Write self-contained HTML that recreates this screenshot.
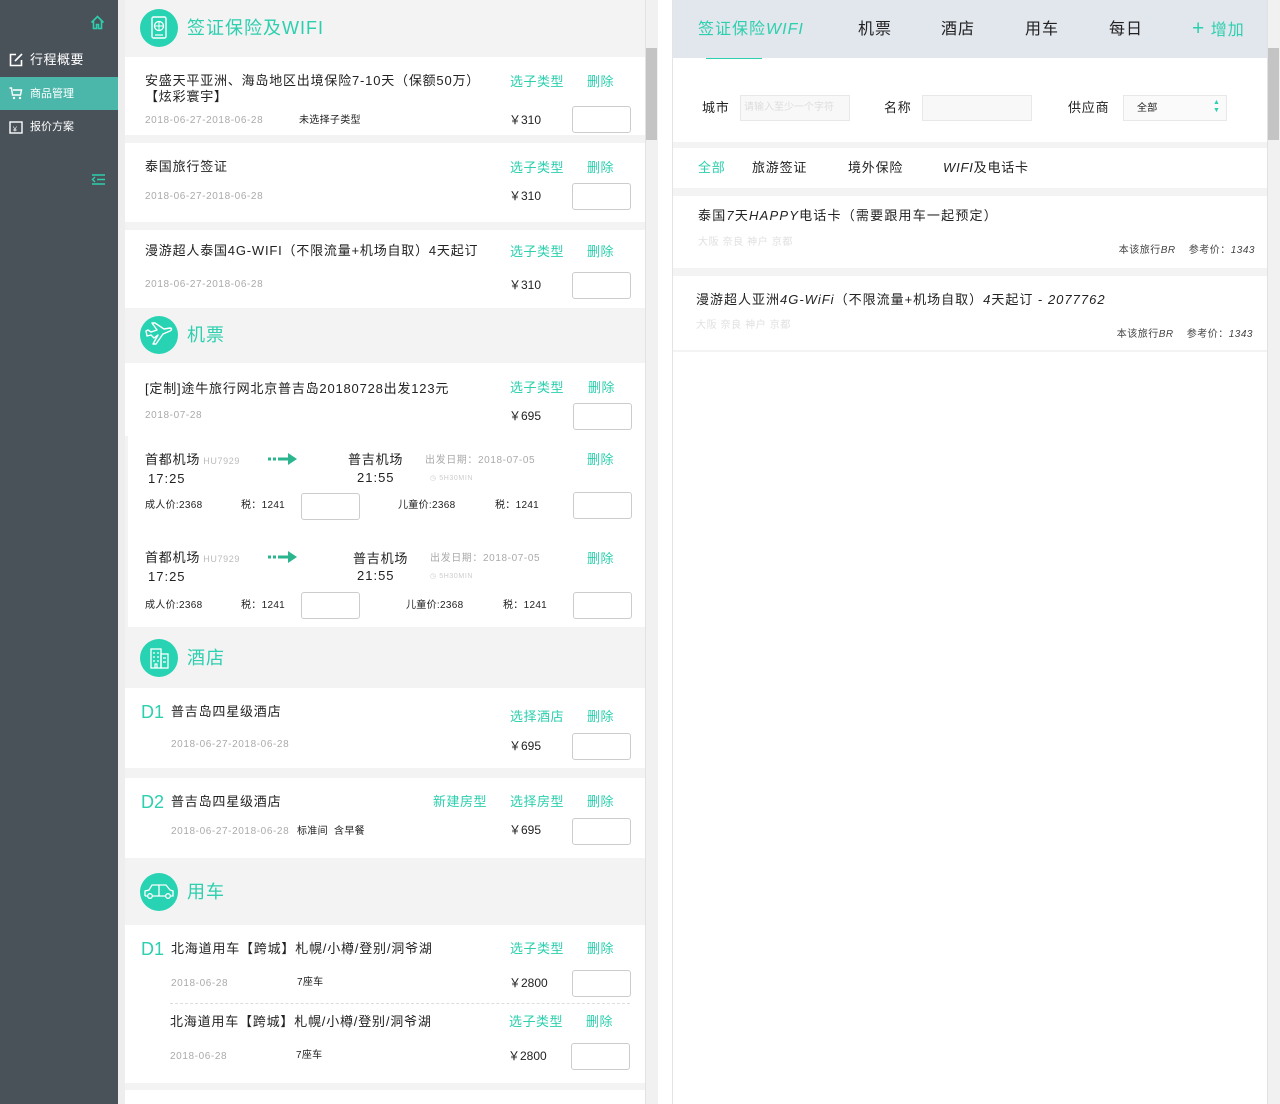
<!DOCTYPE html>
<html><head><meta charset="utf-8"><style>
*{margin:0;padding:0;box-sizing:border-box}
body{width:1280px;height:1104px;position:relative;overflow:hidden;background:#fff;font-family:"Liberation Sans","Noto Sans CJK SC",sans-serif;color:#222}
div,span{position:absolute}
.t{font-size:13px;line-height:14px;white-space:nowrap;color:#222;letter-spacing:.8px}
.g{font-size:10px;line-height:12px;color:#aaa;white-space:nowrap;letter-spacing:.6px}
.k{font-size:10px;line-height:12px;color:#222;white-space:nowrap;letter-spacing:.3px}
.l{font-size:13px;line-height:14px;color:#2ccfae;white-space:nowrap;letter-spacing:.5px}
.p{font-size:12px;line-height:14px;color:#222;white-space:nowrap}
.in{border:1px solid #ccc;border-radius:3px;width:59px;height:27px;background:#fff}
.w{background:#fff;left:125px;width:520px}
.ic{width:38px;height:38px;border-radius:50%;background:#27d3b2;left:140px}
.h{font-size:18px;line-height:20px;color:#2ccfae;left:187px;white-space:nowrap;letter-spacing:1px}
.d{font-size:18px;line-height:20px;color:#2ccfae;left:141px}
.rt{font-size:16px;line-height:16px;color:#222;white-space:nowrap;letter-spacing:1px}
.rk{font-size:10px;line-height:12px;color:#444;white-space:nowrap;letter-spacing:.5px;right:25px}
</style></head><body>
<div style="left:0;top:0;width:118px;height:1104px;background:#4a5259"></div>
<div style="left:118px;top:0;width:7px;height:1104px;background:#eee"></div>
<svg style="position:absolute;left:90px;top:15px" width="15" height="15" viewBox="0 0 15 15"><path d="M1.5 7.5L7.5 1.5L13.5 7.5M3.5 6v7.5h3v-4h2v4h3V6" fill="none" stroke="#2ccfae" stroke-width="1.6"/></svg>
<svg style="position:absolute;left:9px;top:53px" width="14" height="14" viewBox="0 0 14 14"><path d="M7 1.5H1.5v11h11V7M6 8l7-7" fill="none" stroke="#fff" stroke-width="1.6"/></svg>
<div style="left:30px;top:52px;font-size:13px;line-height:15px;color:#fff;letter-spacing:.5px">行程概要</div>
<div style="left:0;top:77px;width:118px;height:33px;background:#4bb7ab"></div>
<svg style="position:absolute;left:9px;top:87px" width="14" height="13" viewBox="0 0 14 13"><path d="M0.5 1h2l1 7h8l1-5H4" fill="none" stroke="#fff" stroke-width="1.4"/><circle cx="5" cy="11" r="1.2" fill="#fff"/><circle cx="11" cy="11" r="1.2" fill="#fff"/></svg>
<div style="left:30px;top:88px;font-size:11px;line-height:12px;color:#fff">商品管理</div>
<svg style="position:absolute;left:9px;top:121px" width="14" height="13" viewBox="0 0 14 13"><rect x="1" y="1" width="12" height="11" fill="none" stroke="#fff" stroke-width="1.4"/><text x="4" y="10.5" font-size="7" fill="#fff">¥</text></svg>
<div style="left:30px;top:121px;font-size:11px;line-height:12px;color:#fff">报价方案</div>
<svg style="position:absolute;left:91px;top:174px" width="14" height="11" viewBox="0 0 14 11"><path d="M1 1h13M6 5.5h8M1 10h13M4 3L1.5 5.5 4 8" fill="none" stroke="#2ccfae" stroke-width="1.4"/></svg>

<div style="left:125px;top:0;width:520px;height:1104px;background:#f3f3f3"></div>
<div style="left:645px;top:0;width:13px;height:1104px;background:#f1f1f1;border-left:1px solid #e2e2e2"></div>
<div style="left:646px;top:48px;width:11px;height:92px;background:#c4c4c4"></div>

<div class="ic" style="top:9px"></div>
<svg style="position:absolute;left:140px;top:9px" width="38" height="38"><rect x="12" y="8" width="14" height="21" rx="1.5" fill="none" stroke="#fff" stroke-width="1.4"/><circle cx="19" cy="17" r="4.5" fill="none" stroke="#fff" stroke-width="1.3"/><path d="M14.5 17h9M19 12.5v9" stroke="#fff" stroke-width="1"/><path d="M15 26h8" stroke="#fff" stroke-width="1.2"/></svg>
<div class="h" style="top:18px">签证保险及WIFI</div>

<div class="w" style="top:57px;height:78px"></div>
<div class="t" style="left:145px;top:74px">安盛天平亚洲、海岛地区出境保险7-10天（保额50万）</div>
<div class="t" style="left:145px;top:90px">【炫彩寰宇】</div>
<div class="g" style="left:145px;top:115px">2018-06-27-2018-06-28</div>
<div class="k" style="left:299px;top:115px">未选择子类型</div>
<div class="l" style="left:510px;top:75px">选子类型</div><div class="l" style="left:587px;top:75px">删除</div>
<div class="p" style="left:509px;top:113px">￥310</div>
<div class="in" style="left:572px;top:106px"></div>

<div class="w" style="top:143px;height:79px"></div>
<div class="t" style="left:145px;top:160px">泰国旅行签证</div>
<div class="g" style="left:145px;top:191px">2018-06-27-2018-06-28</div>
<div class="l" style="left:510px;top:161px">选子类型</div><div class="l" style="left:587px;top:161px">删除</div>
<div class="p" style="left:509px;top:189px">￥310</div>
<div class="in" style="left:572px;top:183px"></div>

<div class="w" style="top:230px;height:78px"></div>
<div class="t" style="left:145px;top:244px">漫游超人泰国4G-WIFI（不限流量+机场自取）4天起订</div>
<div class="g" style="left:145px;top:279px">2018-06-27-2018-06-28</div>
<div class="l" style="left:510px;top:245px">选子类型</div><div class="l" style="left:587px;top:245px">删除</div>
<div class="p" style="left:509px;top:278px">￥310</div>
<div class="in" style="left:572px;top:272px"></div>

<div class="ic" style="top:316px"></div>
<svg style="position:absolute;left:140px;top:316px" width="38" height="38"><path d="M7 20l4-1 3 3 4-3-5 9 3 0 7-10 7-3c2-1 2-3 0-3l-6 1-9-6-3 0 5 7-6 2-3-2-2 1z" fill="none" stroke="#fff" stroke-width="1.4" stroke-linejoin="round"/></svg>
<div class="h" style="top:325px">机票</div>

<div class="w" style="top:363px;height:73px"></div>
<div class="t" style="left:145px;top:382px">[定制]途牛旅行网北京普吉岛20180728出发123元</div>
<div class="g" style="left:145px;top:410px">2018-07-28</div>
<div class="l" style="left:510px;top:381px">选子类型</div><div class="l" style="left:588px;top:381px">删除</div>
<div class="p" style="left:509px;top:409px">￥695</div>
<div class="in" style="left:573px;top:403px"></div>

<div style="left:128px;top:436px;width:517px;height:191px;background:#fff"></div>
<div class="t" style="left:145px;top:453px">首都机场<span class="g" style="position:static;font-size:9px;color:#bbb"> HU7929</span></div>
<svg style="position:absolute;left:268px;top:453px" width="30" height="12"><path d="M0 6h3M5 6h3M10 6h12" stroke="#2ab58f" stroke-width="3"/><path d="M20 0l9 6-9 6z" fill="#2ab58f"/></svg>
<div class="t" style="left:348px;top:453px">普吉机场</div>
<div class="g" style="left:425px;top:455px">出发日期：2018-07-05</div>
<div class="g" style="left:430px;top:473px;font-size:7px;color:#ccc">◷ 5H30MIN</div>
<div class="l" style="left:587px;top:453px">删除</div>
<div class="t" style="left:148px;top:472px;letter-spacing:1px">17:25</div>
<div class="t" style="left:357px;top:471px;letter-spacing:1px">21:55</div>
<div class="k" style="left:145px;top:500px">成人价:2368</div>
<div class="k" style="left:241px;top:500px">税：1241</div>
<div class="in" style="left:301px;top:493px"></div>
<div class="k" style="left:398px;top:500px">儿童价:2368</div>
<div class="k" style="left:495px;top:500px">税：1241</div>
<div class="in" style="left:573px;top:492px"></div>
<div class="t" style="left:145px;top:551px">首都机场<span class="g" style="position:static;font-size:9px;color:#bbb"> HU7929</span></div>
<svg style="position:absolute;left:268px;top:551px" width="30" height="12"><path d="M0 6h3M5 6h3M10 6h12" stroke="#2ab58f" stroke-width="3"/><path d="M20 0l9 6-9 6z" fill="#2ab58f"/></svg>
<div class="t" style="left:353px;top:552px">普吉机场</div>
<div class="g" style="left:430px;top:553px">出发日期：2018-07-05</div>
<div class="g" style="left:430px;top:571px;font-size:7px;color:#ccc">◷ 5H30MIN</div>
<div class="l" style="left:587px;top:552px">删除</div>
<div class="t" style="left:148px;top:570px;letter-spacing:1px">17:25</div>
<div class="t" style="left:357px;top:569px;letter-spacing:1px">21:55</div>
<div class="k" style="left:145px;top:600px">成人价:2368</div>
<div class="k" style="left:241px;top:600px">税：1241</div>
<div class="in" style="left:301px;top:592px"></div>
<div class="k" style="left:406px;top:600px">儿童价:2368</div>
<div class="k" style="left:503px;top:600px">税：1241</div>
<div class="in" style="left:573px;top:592px"></div>

<div class="ic" style="top:639px"></div>
<svg style="position:absolute;left:140px;top:639px" width="38" height="38"><rect x="11" y="10" width="10" height="19" fill="none" stroke="#fff" stroke-width="1.3"/><rect x="21" y="15" width="7" height="14" fill="none" stroke="#fff" stroke-width="1.3"/><path d="M13 14h2M17 14h2M13 18h2M17 18h2M13 22h2M17 22h2M23 19h3M23 23h3M15 29v-4h2v4" stroke="#fff" stroke-width="1.2" fill="none"/></svg>
<div class="h" style="top:648px">酒店</div>

<div class="w" style="top:688px;height:80px"></div>
<div class="d" style="top:702px">D1</div>
<div class="t" style="left:171px;top:705px">普吉岛四星级酒店</div>
<div class="g" style="left:171px;top:739px">2018-06-27-2018-06-28</div>
<div class="l" style="left:510px;top:710px">选择酒店</div><div class="l" style="left:587px;top:710px">删除</div>
<div class="p" style="left:509px;top:739px">￥695</div>
<div class="in" style="left:572px;top:733px"></div>

<div class="w" style="top:778px;height:80px"></div>
<div class="d" style="top:792px">D2</div>
<div class="t" style="left:171px;top:795px">普吉岛四星级酒店</div>
<div class="g" style="left:171px;top:826px">2018-06-27-2018-06-28</div>
<div class="k" style="left:297px;top:826px">标准间&nbsp; 含早餐</div>
<div class="l" style="left:433px;top:795px">新建房型</div><div class="l" style="left:510px;top:795px">选择房型</div><div class="l" style="left:587px;top:795px">删除</div>
<div class="p" style="left:509px;top:823px">￥695</div>
<div class="in" style="left:572px;top:818px"></div>

<div class="ic" style="top:873px"></div>
<svg style="position:absolute;left:140px;top:873px" width="38" height="38"><path d="M5 23v-5l4-1 3-5h14l4 5 3 1v5h-3M12 23h14M8 23H5M19 12v11" fill="none" stroke="#fff" stroke-width="1.3"/><circle cx="10" cy="23" r="2.3" fill="none" stroke="#fff" stroke-width="1.3"/><circle cx="28" cy="23" r="2.3" fill="none" stroke="#fff" stroke-width="1.3"/></svg>
<div class="h" style="top:882px">用车</div>

<div class="w" style="top:925px;height:158px"></div>
<div class="d" style="top:939px">D1</div>
<div class="t" style="left:171px;top:942px">北海道用车【跨城】札幌/小樽/登别/洞爷湖</div>
<div class="g" style="left:171px;top:978px">2018-06-28</div>
<div class="k" style="left:297px;top:977px">7座车</div>
<div class="l" style="left:510px;top:942px">选子类型</div><div class="l" style="left:587px;top:942px">删除</div>
<div class="p" style="left:509px;top:976px">￥2800</div>
<div class="in" style="left:572px;top:970px"></div>
<div style="left:170px;top:1003px;width:460px;border-top:1px dashed #ddd"></div>
<div class="t" style="left:170px;top:1015px">北海道用车【跨城】札幌/小樽/登别/洞爷湖</div>
<div class="g" style="left:170px;top:1051px">2018-06-28</div>
<div class="k" style="left:296px;top:1050px">7座车</div>
<div class="l" style="left:509px;top:1015px">选子类型</div><div class="l" style="left:586px;top:1015px">删除</div>
<div class="p" style="left:508px;top:1049px">￥2800</div>
<div class="in" style="left:571px;top:1043px"></div>
<div class="w" style="top:1090px;height:14px"></div>

<div style="left:672px;top:0;width:1px;height:1104px;background:#e4e4e4"></div>
<div style="left:1267px;top:0;width:13px;height:1104px;background:#f1f1f1;border-left:1px solid #e2e2e2"></div>
<div style="left:1268px;top:48px;width:11px;height:92px;background:#c4c4c4"></div>
<div style="left:673px;top:0;width:594px;height:58px;background:#e2e6ed"></div>
<div class="rt" style="left:698px;top:22px;color:#2ccfae">签证保险<i>WIFI</i></div>
<div style="left:706px;top:58px;width:56px;height:1px;background:#2ccfae"></div>
<div class="rt" style="left:858px;top:22px">机票</div>
<div class="rt" style="left:941px;top:22px">酒店</div>
<div class="rt" style="left:1025px;top:22px">用车</div>
<div class="rt" style="left:1109px;top:22px">每日</div>
<div class="rt" style="left:1192px;top:21px;color:#2ccfae"><span style="position:static;font-size:21px">+</span> 增加</div>

<div class="t" style="left:702px;top:101px">城市</div>
<div style="left:740px;top:95px;width:110px;height:26px;border:1px solid #e8e8e8;background:#f8f8f8"></div>
<div class="g" style="left:744px;top:102px;color:#ddd;letter-spacing:0">请输入至少一个字符</div>
<div class="t" style="left:884px;top:101px">名称</div>
<div style="left:922px;top:95px;width:110px;height:26px;border:1px solid #e8e8e8;background:#f8f8f8"></div>
<div class="t" style="left:1068px;top:101px">供应商</div>
<div style="left:1123px;top:95px;width:104px;height:26px;border:1px solid #e8e8e8;background:#fafafa"></div>
<div class="k" style="left:1137px;top:103px">全部</div>
<div style="left:1213px;top:99px;font-size:7px;line-height:8px;color:#2ccfae">▲<br>▼</div>

<div style="left:673px;top:142px;width:594px;height:6px;background:#f3f3f3"></div>
<div class="t" style="left:698px;top:161px;color:#2ccfae">全部</div>
<div class="t" style="left:752px;top:161px">旅游签证</div>
<div class="t" style="left:848px;top:161px">境外保险</div>
<div class="t" style="left:943px;top:161px"><i>WIFI</i>及电话卡</div>
<div style="left:673px;top:188px;width:594px;height:8px;background:#f3f3f3"></div>
<div class="t" style="left:698px;top:209px;letter-spacing:1.2px">泰国<i>7</i>天<i>HAPPY</i>电话卡（需要跟用车一起预定）</div>
<div class="g" style="left:698px;top:237px;color:#e0e0e0">大阪 奈良 神户 京都</div>
<div class="rk" style="top:245px">本该旅行<i>BR</i>&nbsp;&nbsp;&nbsp; 参考价：<i>1343</i></div>
<div style="left:673px;top:268px;width:594px;height:8px;background:#f3f3f3"></div>
<div class="t" style="left:696px;top:293px;letter-spacing:1px">漫游超人亚洲<i>4G-WiFi</i>（不限流量+机场自取）<i>4</i>天起订 - <i>2077762</i></div>
<div class="g" style="left:696px;top:320px;color:#e0e0e0">大阪 奈良 神户 京都</div>
<div class="rk" style="top:329px;right:27px">本该旅行<i>BR</i>&nbsp;&nbsp;&nbsp; 参考价：<i>1343</i></div>
<div style="left:673px;top:350px;width:594px;height:2px;background:#f3f3f3"></div>
</body></html>
